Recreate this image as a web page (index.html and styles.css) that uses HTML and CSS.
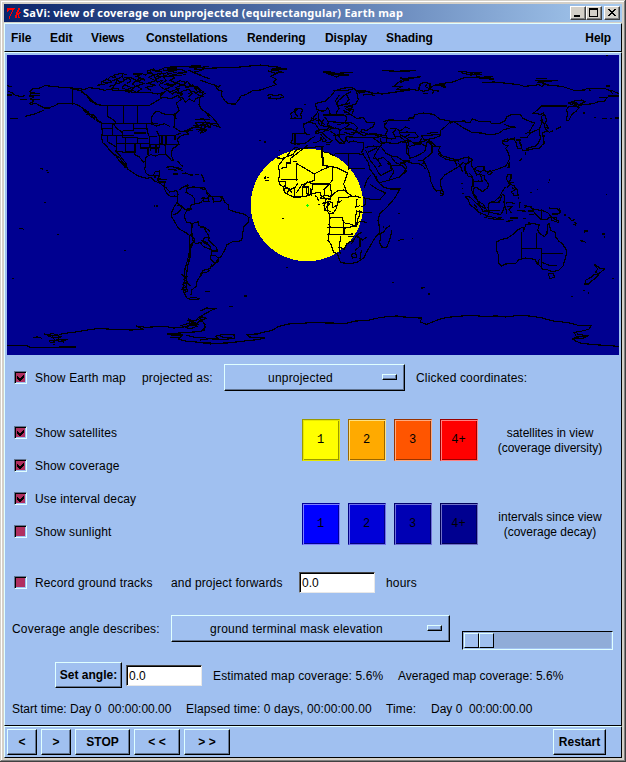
FILE: index.html
```html
<!DOCTYPE html>
<html lang="en">
<head>
<meta charset="utf-8">
<title>SaVi: view of coverage</title>
<link rel="stylesheet" href="styles.css">
</head>
<body>
<div class="window">
  <header class="titlebar">
    <svg class="logo" viewBox="0 0 16 16"><path d="M1 3h8v1h-1v1h-1v2h-1v2h-1v2h-1v3H3v-3h1V9h1V7h1V5H3v1H2v1H1zM12 3h2v2h-1v2h-1v1h1V7h2v1h-1v1h-1v3h1v1h-2v-3h-1v3H9v-3h1V7h1V5h1z"/></svg>
    <h1 class="title">SaVi: view of coverage on unprojected (equirectangular) Earth map</h1>
    <div class="winbuttons">
      <span class="winbtn"><svg viewBox="0 0 14 12"><path d="M3 8h6v2H3z"/></svg></span>
      <span class="winbtn"><svg viewBox="0 0 14 12"><path fill-rule="evenodd" d="M2 1h9v9H2zM3 3h7v6H3z"/></svg></span>
      <span class="winbtn close"><svg viewBox="0 0 14 12"><path d="M3 2h2v1h1v1h2V3h1V2h2v1h-1v1H9v1H8v1h1v1h1v1h1v1H9V8H8V7H6v1H5v1H3V8h1V7h1V6h1V5H5V4H4V3H3z"/></svg></span>
    </div>
  </header>
  <nav class="menu bevel">
    <span class="m-file">File</span><span class="m-edit">Edit</span><span class="m-views">Views</span><span class="m-const">Constellations</span><span class="m-rend">Rendering</span><span class="m-disp">Display</span><span class="m-shad">Shading</span><span class="m-help">Help</span>
  </nav>
  <main class="main bevel">
    <svg class="map" viewBox="7 55 612 300">
      <circle class="covered" cx="307" cy="205" r="56.300"/>
      <g class="coast" transform="translate(0 50) scale(.333333)">
        <path d="M21 107l14 3M24 124l14 5 8 7 20 4 10-4M21 135h14M60 148h20M30 205h24M76 199l15-4 12-3 18-7 10-4M132 175h18M98 165l-9-4 13-8-12-6 12-6-14-3 5-8h15l-20-5 10-8 22-3 14-7 14 1 36 4 31 2 39 4 12-5 27 3 21 5 12-3 24 4 20-1 15 4 28 3h39l22 4 18-5M95 130h25M88 137h32M97 149h22M95 161h14l15 9 18 4 18-5 17-9h43l21 9 10 8 10 5M217 118v47M217 118l25 3 18 15 10 16 20 12 30 3h127M245 126l20 13 10 12 15 10M247 176l12 7 9 9 12 3 9 9 7 10 8 6 3 28-2 15 3 15 11 9 8 12 15 15 18 10 8 16 13 7M250 182l14 3-3 7 15 2v7l14 2 1 10 14 4M257 186l8 6M267 196l7 5M278 203l8 6"/>
        <path d="M322 167v32l12 6 15 13M371 167v52M413 167v52M304 220h145l20 8 24-7 16 8M302 236h35M337 220v36h-35M323 256v19l14 9 12 8M337 256h64M350 256v47M350 281h28M368 242v21h45v17M368 242h33v-22M401 235h38M401 249h38M340 220l9 14 14 10 5 8M377 263v43h28v-26M377 280h72M413 265h31M439 220l3 25 6 15 3 44M422 281v13h22v21M452 294h22M470 243l8 15 2 25M449 283h87M448 260l23-1M480 256h45l18-7M486 256v30M498 256v27M525 255v14M479 283l-5 27M495 285l2 27M468 285v25"/>
        <path d="M345 301l13 13 8 12 14 16-5 10-8-10-12-13-9-17M350 320l8 14 17 15M350 303l24 4 24-2 9 10 11 6 12 15 5-1 2 11-3 11 4 12 8 7 13 1 6-11 14-3-1 14-7 13 7 6h17l-2 21 8 14 12 9 12-2 9 4M366 335l12 10 5 12 18 13 18 10 22 5 12-3 11 12 14 4 12 10 8 5 12 14M465 385v-9h10v22M474 387l28 1M435 337l2-15 15-8 15 4 11-5 22 2 16 18 4-1-7-20 4-15 12-8 8-6-5-16 13-11 22-4-13-9 14-6 18-6 15 3 7 8-9 8 16-5 4-5M498 352l18-3 19 8 14 5M503 357l29 4M527 352l20 5M520 372h15M545 371l12-2 14 6h9M586 374h10M606 375l5 12v8M530 332l10 8M540 343l10 6M558 241h22M580 227h24v12h-16M584 208h46M604 217h26"/>
        <path d="M292 107l12-4 2-8 18-8 8-8 16 5-7-8 17-5h12l10 4M294 104h16l17-7M306 95l13 3 18-2M319 86l14 8 21-8-8 15 20-3M327 109l17-4-7 10 20 2M341 76l11 12 13-8M348 92l19 3 18-12 8 10-12 7M366 72l5 20M373 82h16l15 6M374 105l21 8-14 6-15-5 10-12M376 123h18l-10 6M398 72h28l-17 7 20 7-16 8 19 7-22 7 15 9-15 10-15-8 11-10-9-8 13-9-14-7M408 93l12-10 16 8M424 70l13 5 14-10 11 9-16 8 20 10-24 8 25 6-30 6 17 9M442 63l18-6 11 7 21-10 20-3h17l28-2 23-1h22l-19 9 23 4-26 6 22 8M442 67l22 7 23-6-15 11 24-1 14-9 15 7M456 61l29 5M462 76l10 20 14-5-8 15 12 11M465 89l24-11 9 14-15 10M470 69l21 3 18-8 21 4M489 60l23 3 31-5 16 7-29 5M495 79h25l18-11 20 7M500 71l24 13-14 7 20 9-19 8-19-6M497 101l22 3 21-12 22 7M510 112l-15 6 17 7 28-11M502 57h29M514 76h33M565 60l30 14 35 13M530 70l30-3M545 50l55 2 27-2"/>
        <path d="M447 167l16-10 14-8 12-8 24 5 20-10 10 12-14 12 8 21-12 15 4 11-7-12-16-1-17-3-15-8-11 5-8 14 1 18 17 1M525 190l-3 42 13 9 7 4M483 136l18-16 16 12 18-12-7-8 25-9 5 10 22-5 12 8 9 4-13 10 17 10-18 6-5 9-14-8-12 10-8-13-13-1 12-13-14-5M512 112l20-14 16 9 14-13 10 12 20 5 18 15M520 127l28 5-12 9M542 125l25-7 10 13-14 11M560 111l17-6 14 18 18 7M565 132l14-9 18 13 15 3M599 145l-2 20 8 14 11 6 8 12 6 7M485 147l-5-12 10-8M542 243l20 3 13-12 20-6-8-9 20-2 8 16-22 12"/>
        <path d="M508 425h10l12-4 4 12-3 24-9 14-8 18 1 11 12 20 8 15 24 14 10 7v46l-6 27-8 27-2 36-4 22 4 17 9 15 20 3 18-3M569 555l6 0 5 21-8 8 0 20-5 25-5 26-3 26v35M580 576l-8 20-3 40M580 560l5 16M590 742h-20M573 735l2-15 14-11 2-15 7-11 10-14 13-3 9-5"/>
        <path d="M536 421l10-8 16-8 1 10 14-4 25 1 13 2 8 16 7 4M560 413l-2 14 17 9 8 9 1 17-12 4 1 12-15 1-15-11-13-1M531 460l15 8-4 12-9 9-13 6M544 470l13 9 15-5M583 455l2 7 17-4 10-12 12-2 6-10M602 445l12-1M573 479l-13 3-8 16 7 18 17 4v13l-2 12 4 13M576 521l19-6 2 12 19 6 14 11M578 555v17l8 8 19-2 8-15 17 1M611 566l1 12 18 10M557 410l9-5M545 672l9 8M550 680h10l-8 9 10 7-14 8 11 6-14 8 15 7-11 3M562 698l10 10M546 716l17 4M617 725h13"/>
        <path d="M120 355l10 3M137 361h8M142 368h6M132 457h5M463 466v4M467 468h8M58 535l8 1 5 2M171 554h6M372 601h5M37 685h5"/>
        <path d="M21 887h60l9 5h80l9-1h48M100 862h22M108 859l18 6M133 852l13 3 10-5 16 5-14 3-18-2 20 8 24-5-13 10 32-1-28 7 23-3M148 873l15-3 28 6M150 877l14-1M162 881v5M170 858l17-7 40-5 36-6 34-5 50 4 50 1 22-2h12l-22-10 27 4 37-2 21-1 26 5 20-1 22-4 19-7 12-3 9-8 19-6-24-4-10 10-24-1 18 10-20 7 30-1M564 805l28 18-23 4M540 828l28-9 22 10-20 8-25-10M596 811l13 5 7 15-12 14-25 1-39 3-38 2 20 6 26-1-13 11 20 6 33 3 24 3 20 3M500 853h50M510 862h32M558 855l25 7h35M578 814l24-9 8-12 20-8"/>
      </g>
      <g class="coast" transform="translate(200 50) scale(.333333)">
        <path d="M0 58l38-4 62-1 50-5 32-3 31 4 27 3-11 9 24 7-24 1M215 57h47M205 63l25 8-18 8 18 9-10 7 8 9-27 9-18 7-24 1-21 13-14 3-9 14-9 11H96l-13-2-10-9-8-14 1-14-14-4-3-12-22-7-19-7-8-1M45 110l15-2-8 8M200 136l14-3 8 4 22-3 8 7-22 6-24-3 8-4M213 60h18M370 66h23l20 6 14-5h32M375 68l22 8 12 5 14-6h23M387 72h45M545 62l30 1 29 1h27"/>
        <path d="M630 83l-27 8-21 17 25 1-15 8 38 2M550 133l-18-4-10 3-25-9h-26l-9-7-10-4-25 3-22 8-14 17-16 14-28 6 2 17 18 7 10-2 6-9 4 7 5 16h9l8-3 2-9 7-9-7-11 4-12 17-15 11-8M400 122h38l25-6 17 14M418 135l-12 18 8 13 23-2 12-4M454 125l-16 7 10 16-11 12 12-1M470 124l5 25-9 14-20 5-10 8 14 7M480 129l22-5 26 8M490 135l24-2 10 5M530 129l30 1 70-10M312 163h5M270 207l15-3 20 2-3-13 6-14-11-5-13 4 3 14 8 8M279 186l-7 6 4 12M296 176l-14 8 8 12M275 283l3-33 38 1-4-17-3-12 18-6 12-12 10-12 6-10 15-2M285 253v32M274 283l-1-6M277 281l18 1 18-1 12-7 9-9 10-5M316 251l15 4M310 225l18-10 24-10M325 217l20 3 13 21-12 9M333 203l22 10 3 12M355 190v17l20 18M370 195h62l8 6-3 17-52-3-12-15M371 207l-8 20 15 2 12 3-22 15M344 248l12-10 30 3 12-8-16-8 6-13M345 250l22-2 12 13 17 11-9 7-22-7M362 253l18 20M392 237l16-3 14 5 16-8 11-8-23-7M390 243l15 10 2 15 13 12M399 257l23-3 14-2M421 237l-4 24 15 17M438 193h14l18 12 20-2 9 13 24 3-2 10-21 12-18-3M445 175l15 4-3 14M433 170h25l-12 18h-14M436 216l24 4 13 13-14 22-26-8M408 271l14 8 11 1 8-20h18M340 277h9l22-11M363 262v9M378 284h12M435 237h20l24 12M443 180l18-2M430 181l25 14M440 210l-9 10-20 5"/>
        <path d="M440 260l16 2 29 1 32 0 26-3M435 263l10 14 16-4 16 5 14 1-2 20-2 6M452 248l18-2 20 10 28-4 28 9 14 3v12l-17 2M490 236l-9 9 14 4 12 4M541 263l4 20-5 8-20-3-24 4M540 257h22M520 264l23 17M508 251l38 2M550 216l14-6 66 1M555 218l-2 14 11 8-8 14 6 11 13 2 12-3-8-16 9-11-17-1M565 210l-9 14M590 238l13 4 13-11 14 5M600 242l-2 9 14 10 18-8M587 260h14l11 10 18 6M545 281l15-3 30 3 18-7 22-3M544 291l14 19 16 8 17 2 18 12h21M539 291l-17 27 10 10 12 18-10 4M496 300l7 12 8 20 15 18 8 16 8 11M503 307l28-14M518 323l14 5 18-6 21 20 3 18-32 17M560 340l18 7 24-1M573 349l9 17-14 21M573 320l13 17 21 10 13 15-19 18-35 11-28 7-6-4-3-15M606 339l24-6M620 276v34l10 7"/>
        <path d="M287 291l-15 12-12 17-10 7-15 21 4 22-3 18 2 13 13 12 2 14 12 7 16 7 20 0 20-3 16-7 17-4 7 2v7l11 6 6 7-6 17 1 10 15 14 2 15-3 20 3 5-3 22-3 19 10 14 6 21 12 5 10 27 29 3 20-4 21-14 7-16 15-25 10-17 15-18v-16l-5-20 5-19 23-22 21-24 17-29h-30l-19-5-18-17-10-20-13-17-5-20-22-34M287 291l12 5 24-2 31-4h15l-2 15 20 4 15 9 4-8 39 0 19 0 20 3 8-1"/>
        <path d="M232 325h16l13-5 19-7 7-12 19-7M242 355l18-3v-13h12v-14l52-40M280 335h11M242 388h52M289 340v52M289 340l22 13 32 19 24-13 25-10M366 290v32l5 25 27 3 17 5 26 13M343 373v18l-37 13-16 24M370 322l-1 26M398 351l-1 40-9 11M446 308v52M446 356h50M443 367l-6 20-6 15 10 26 16 11M390 402l4 24-2 22-8 2M337 402h50M340 400l-7 34M324 394l-17 18v25M327 394l13 12M307 411h19l-2 27M318 412l4 24M240 394h15l2 18 15 6 14-7 8-12M253 404l-2 12 16 1 9 12M267 418l-7 14M284 412l-1 30M388 402l-16 16 2 17-13 10M361 445h29l11-15 16-9 15-1 10 8M371 435l24 5M381 454l15 3 3 16 13-9 4-21 24-1 27-4 15 5M366 462l18-5-1 24 9 5M372 456l2 23 16-20M385 490l15-1 8-12 5-18 13-8M390 502h36l5 16-2 15h-47M380 553h52l28-1M432 532v20M430 518l20 4 18 8M470 480l-3 19 1 31M471 448l-3 23 12-4M469 485l10-2v14l-6 10-5 24M432 556l-2-22h8l28-6 13-14 21 3M423 557l-6 35 4 19M418 591l14 7 8-16 22-14 11-14M462 560l-18 0M455 613l12-4 3 12-13 3zM470 560l10 6v23l-15 12M463 568l-9 14M480 486l37 2M484 471l13-8v-19M490 443l24 5 25 1 18-20-26-12-20-13M512 375l-12 16-7 22M484 600l-4 26M346 437l6 5 3 10M355 464h6M331 413l3 24M487 545l-17 11 18 14 12-8"/>
        <path d="M197 377v6M201 383h6M192 384h5M194 391h12M246 505h5M236 301h4M178 272h6M192 276h5M232 324h9M258 653h5M577 697h6M595 491h5M533 525h6M551 527v6M570 527l-12 8-6 10-12 6 1 13-2 15 6 12 15 1 8-19 5-18 2-14M595 572h6M607 568h4M16 725h14M131 738h10M88 769h10M4 373v5M12 389v6"/>
        <path d="M0 415l18 5 4 14 14 6 32 1 5 14 12 10 2 14 19 7 28 7 13 10-2 13-14 15-3 22-3 18-12 4-13-1-19 10-6 15-13 23-7 3 0 8-18 16M22 440l6 15H12l-3-13M38 438l2 18 22-3 6-10M0 532l12 2 12 20 3 18 22 20 3 11h-17l-4-12-10-13-16-8M0 578l11 12 24 10M35 605l-4 22 14 13 11-15-11-9-11-1M36 642l-5 14-21 5-10 14M0 170l6 10 13 7 15 12 12 13 13 19-27-8 0 10-18-6-14-4M0 207h12l8 15 33-2M0 223h17M20 223l14 10M0 240h20M0 125l15 5-15 9"/>
        <path d="M0 783l20-9 25 2-17 8-28 16M0 805l15 18-2 17-13 4M0 870l28-4 28 1-9-8 20-6 35 2 1 9-25 4-42-1M55 855l15 7 26 1M0 877l43 3 38-1 53-6 37-4 24-5-47-3-9-8 34-1 14-5 27-5 21-12 30-8 28-1 40-3 54 1 52 1 28-7 34-1 33-8 32-5 26-1 20 3 20 1"/>
      </g>
      <g class="coast" transform="translate(400 50) scale(.333333)">
        <path d="M0 62h47M0 84l18 1 45-5-35 6-28 12M0 95l28-5M0 119h20l-20 4M0 119l28-2 26 4 8-20 12-4 16 4v14l10 9-3 9M60 103l-2 16 12 5 20-5M82 101l-6 9 25 12 15 1M90 113l15-8 28 0 3 7-12-2M70 130h15M130 105l-8-4 37-5 30-12 37-2 19 3 38 3-12-5-23 1-20-6 6-7M175 65h22l13 4 36-1-24 3 24 2-34 2-28-7M251 80h29M245 98l37-2 30 3 45 5 15 5 24-2 22-3 8 6 10-10-23-6h42M408 85h33M405 92l69-1M410 97l16 1 8 6 29 3 23 2 36 12 32-1 6-5h53l17 7 8 9M566 115l5 7M617 108h14M632 120l24 11M656 138l-33 0M598 143h23l-9 12-17 0-15 6-45 5 20-11-11-5-26 4 16 6-31-2M505 160l22 8 11 4-9 11-14 11-9 18h-6l2-23-2-10 5-8 14-1 16-8M521 159l15 15M500 168h-75l-22 20-6 3h14l11 3 10-6M434 193l5 16-2 11 8 14-11-1-2-13-9-8 3-14zM425 201l2 14-8 21-27 13-10 12-23 3"/>
        <path d="M0 211h25l3-7h12l4-10 25-5 32 4 18 14 30 6 15 3 27 18 26 14 28 1 25 6 26-5 15-11 23-6 14-1-22-4-13-5M149 220l12-6 32-1 4 3 12 2 9-11 18 7 34 1 5 6h23l17-9 6-12 15-7 25 0 7 11 16 8 20 7-8 12-8 15-12 5M149 217l-12 12-15 12v16l-22 8-27 5-8-12 22-2 35-4M80 250l35-3M0 248l20-2 25 2 10 12-10 4-22-3M0 255l20 10 22 15 22 3M0 275l26 3-3 12 3 17 2 18 18-5 28-15 4-14 2-12 8-5 10 4M64 265l-4 13 18-7 10 7 8 3M40 280l20-4M26 290l36-10 14 8M100 290l-17-15 7-6M86 269l13 12 9 8 12 1-5 11 11 16 25 8 24 5 11-5 20-4 13 9-12 7-3 5M120 306l-5 8 23 14 26 5 7 14M156 326l20 8"/>
        <path d="M0 339l18-6 22 8 14-1 14 7 8 9M54 331h17l10 23 8 17 3 23 10 21 7 8 11-3 3 11 7-2-5-14-3-7v-18l12-15 20-12 27-16 8-10 7 4-1 15 10 24 10-1 3 14-3 26 2 8 13 14 2 12 17 9 8 14-16-8-9-18-8-8-5-12 3-15M108 289h-12v20l-26 21-1 11M117 420l12 4 1 10-9 3M0 378l14-13 6-15-7-9-13 0M184 401h5M187 413v5M187 430h6M176 340l8 14 4 13M207 325l-3 12-12 14 5 20M214 333v14l9 12M223 359l7 16 8-3 14 5 3 11 12 17-5 9-14 11-16-11-13-4v-14l15-3 13 2-5-21M208 370l10 10 2 18M220 360l12-10h20v10l9 6 12-2 27-9 18-8 11-20-3-16-9-16 8-8-15-3-2-9 12 0 12-9 10 1 8 15 2 13 12 1v-12l-7-14M221 357l21 9 10-7M262 370l8-8 6 6-9 7zM323 343l4-3v12l-6 1M306 273l16-6 15 2 7-6M347 270h15M357 277l10 15M427 246l3 19 3 16-8 5-6 9-14 1-8 1-14 4-4-4 8-4 20-5 8-8 7-17-4-14 2-17M429 247l14-3-8-9M350 295h15M365 300l18 1M377 307v8M425 258h10M446 248l14-6M467 238l16-8M365 325l-6 8"/>
        <path d="M195 439h12l11 10 10 10 11 9 10 16h19l-5 14-10-4-20-9-10-12-11-6-8-18-9-10M230 478l13 15M222 462l9 12M252 503l16-4 24 6 14-3-14 7-29-5M298 508h14M318 514l20-2M330 504h24M268 458l17-5 13-12 6-10 10 6-2 18 1 15-5 15-6 8-16-2-17-5-5-13zM303 430l13-19M272 459l26-3 8-20M251 482h49M318 462l4-5 24 3M315 469l5 14-2 10M320 470h16l-9 9 7 10M321 373h12v14l-4 6 3 10 12 6 4 10M322 373l-2 15 10 18M333 398h8M340 405l10 11M332 427l10-6 10-3 2 17-12 1-5-8M328 405l-8 8M337 413l9 8M354 444h4M360 456l-2 17M372 465l9 3-9 6M381 469h13l4 14-13 0M390 472l15 7 20 2 18 7 12 13 15 3M350 481h25M365 484h14M369 507l10-3M386 493h16M398 480l9 13 16 16 17 0 12-10 4 12 18 6 3-7M425 478v31M456 492h18l8-6-5-10M448 474l24 3 10 10M459 504l15 9M492 495h6M505 501l8 7M514 512l12-4M522 516l9 6M520 522l8 4M410 419h4M443 398h5M446 390h4M390 428h6M617 434h5"/>
        <path d="M297 641l-2-27-6-15 1-23 12-7 21-5 16-11 12-12 12-7 6-2 2 9 7-17h13l-8-6 18 3 17 3-5 16 6 10 15 10 7-10 1-25 5-4 6 21 12 4 3 16 7 10 12 9 13 20-2 17-9 30-13 13-20 4-14-6-14-2-10-11-6-7-9-11-26-4-20 5-10 11-30 2-12 6zM365 545v81M410 549v47M365 596h60v61M425 610h63M425 637l24 9 21 1M405 629l8 14 5-16M445 670h16l2 12-14 4zM585 642l13 12 16 3-14 11-5 4-8-6 6-9-10-14M585 672l10 4-12 11-11 8-7 7h-11l4-12 15-8 12-10M550 721h5M563 729h5M513 740h5M64 713h11M66 710v8M85 732h5M636 685h6M552 543h11M554 540v8M540 570l18 7M542 575h10M605 552h11M612 560l4 3M0 568h12M35 565h4M548 189h8M582 203h6M605 205h16M629 206h8M645 204h11M617 17h6"/>
        <path d="M0 798l22 5 43 1-4 12 19 7 17-7 21-8 25-6 42-4 31-2 32 3 45-1 24 3 39-5 24 1 43 6 36 10 22 2 33 5 20 6 40 1-8 11-28 7-16 2 7 13 37-3-20 9-30 1 18-8M532 852l22 4-35 9 9 9 14 5 29 4 41 3 44 3"/>
      </g>
      <path class="satellite" d="M306 205.500h3M307.500 204v3"/>
    </svg>

    <section class="row projection">
      <span class="check on"><svg viewBox="0 0 9 9"><path d="M1 3v3l2 2h1l4-4V1L4 5H3L1 3z"/></svg></span>
      <span class="label t-earth">Show Earth map</span>
      <span class="label t-proj">projected as:</span>
      <div class="option opt-proj"><span>unprojected</span><i></i></div>
      <span class="label t-click">Clicked coordinates:</span>
    </section>

    <section class="display">
      <div class="toggles">
        <div class="toggle"><span class="check on"><svg viewBox="0 0 9 9"><path d="M1 3v3l2 2h1l4-4V1L4 5H3L1 3z"/></svg></span><span class="label">Show satellites</span></div>
        <div class="toggle"><span class="check on"><svg viewBox="0 0 9 9"><path d="M1 3v3l2 2h1l4-4V1L4 5H3L1 3z"/></svg></span><span class="label">Show coverage</span></div>
        <div class="toggle"><span class="check on"><svg viewBox="0 0 9 9"><path d="M1 3v3l2 2h1l4-4V1L4 5H3L1 3z"/></svg></span><span class="label">Use interval decay</span></div>
        <div class="toggle"><span class="check"></span><span class="label">Show sunlight</span></div>
      </div>
      <div class="legends">
        <div class="legend">
          <span class="swatch s1">1</span><span class="swatch s2">2</span><span class="swatch s3">3</span><span class="swatch s4">4+</span>
          <p class="caption">satellites in view<br>(coverage diversity)</p>
        </div>
        <div class="legend">
          <span class="swatch d1">1</span><span class="swatch d2">2</span><span class="swatch d3">3</span><span class="swatch d4">4+</span>
          <p class="caption">intervals since view<br>(coverage decay)</p>
        </div>
      </div>
    </section>

    <section class="row tracks">
      <span class="check"></span>
      <span class="label t-rec">Record ground tracks</span>
      <span class="label t-fwd">and project forwards</span>
      <span class="entry">0.0</span>
      <span class="label t-hours">hours</span>
    </section>

    <section class="angle">
      <span class="t-cov">Coverage angle describes:</span>
      <div class="option opt-angle"><span>ground terminal mask elevation</span><i></i></div>
      <div class="slider"><div class="thumb"><b></b><b></b></div></div>
    </section>

    <section class="setrow">
      <span class="button btn-set">Set angle:</span>
      <span class="entry">0.0</span>
      <span class="t-est">Estimated map coverage: 5.6%</span>
      <span class="t-avg">Averaged map coverage: 5.6%</span>
    </section>

    <section class="times">
      <span class="t-start">Start time: Day 0&nbsp; 00:00:00.00</span>
      <span class="t-elapsed">Elapsed time: 0 days, 00:00:00.00</span>
      <span class="t-time">Time:</span>
      <span class="t-now">Day 0&nbsp; 00:00:00.00</span>
    </section>
  </main>
  <footer class="toolbar bevel">
    <span class="button b30">&lt;</span><span class="button b30">&gt;</span><span class="button b55">STOP</span><span class="button b46">&lt; &lt;</span><span class="button b46">&gt; &gt;</span><span class="button restart">Restart</span>
  </footer>
</div>
</body>
</html>
```
FILE: styles.css
```css
* { box-sizing: border-box; }
body {
  margin: 0;
  font: 12px/15px "Liberation Sans", sans-serif;
  color: #000;
  white-space: nowrap;
}
.window {
  width: 626px;
  height: 762px;
  padding: 4px;
  background: #d4d0c8;
  box-shadow: inset -1px -1px #404040, inset 1px 1px #d4d0c8, inset -2px -2px #808080, inset 2px 2px #fff;
}
.titlebar {
  display: flex;
  align-items: center;
  height: 18px;
  margin-bottom: 1px;
  padding: 0 2px;
  background: linear-gradient(90deg, #0a246a, #a6caf0);
}
.logo { width: 16px; height: 16px; fill: #f00; shape-rendering: crispEdges; }
.title {
  width: 500px;
  margin: 0 0 0 1px;
  font: bold 11px/16px "Noto Sans", sans-serif;
  letter-spacing: .22px;
  color: #fff;
}
.winbuttons { display: flex; margin-left: auto; }
.winbtn {
  width: 16px;
  height: 14px;
  border: 1px solid;
  border-color: #fff #404040 #404040 #fff;
  background: #d4d0c8;
  box-shadow: inset -1px -1px #808080;
}
.winbtn svg { display: block; width: 14px; height: 12px; shape-rendering: crispEdges; }
.close { margin-left: 2px; }
.bevel {
  border: 1px solid;
  border-color: #e0ffff #000 #000 #e0ffff;
  background: #a0c0f0;
}
.menu { display: flex; align-items: center; height: 29px; padding: 1px 0 0 6px; font-weight: bold; letter-spacing: -.08px; }
.m-file { width: 39px; }
.m-edit { width: 41px; }
.m-views { width: 55px; }
.m-const { width: 101px; }
.m-rend { width: 78px; }
.m-disp { width: 61px; }
.m-help { margin-left: auto; margin-right: 10px; }
.main { height: 674px; padding: 2px; }
.map { display: block; width: 612px; height: 300px; background: #000090; }
.covered { fill: #ff0; shape-rendering: crispEdges; }
.coast { fill: none; stroke: #000; stroke-width: 3.5; shape-rendering: crispEdges; }
.satellite { stroke: #0f0; shape-rendering: crispEdges; }

.row { display: flex; align-items: center; padding-left: 7px; }
.label { padding-top: 2px; }
.check {
  flex: none;
  width: 13px;
  height: 13px;
  margin-right: 8px;
  border: 1px solid;
  border-color: #607390 #e0ffff #e0ffff #607390;
  background: #b03060;
  box-shadow: inset 1px 1px #000, inset -1px -1px #a0c0f0;
}
.check svg { display: block; width: 9px; height: 9px; margin: 1px; shape-rendering: crispEdges; }
.projection { height: 45px; }
.t-earth { width: 107px; letter-spacing: .16px; }
.t-proj { width: 82px; letter-spacing: .16px; }
.option {
  display: flex;
  align-items: center;
  height: 27px;
  border: 1px solid;
  border-color: #e0ffff #000 #000 #e0ffff;
  box-shadow: inset -1px -1px #607390;
}
.option span { flex: 1; padding: 2px 6px 0 0; text-align: center; letter-spacing: .2px; }
.option i {
  width: 15px;
  height: 6px;
  margin: -1px 7px 0 0;
  border: 1px solid;
  border-color: #e0ffff #000 #000 #e0ffff;
  box-shadow: inset -1px -1px #607390;
}
.opt-proj { width: 181px; }
.t-click { margin-left: 11px; letter-spacing: .16px; }

.display { display: flex; height: 164px; padding: 16px 0 0 7px; }
.toggles { width: 288px; }
.toggle { display: flex; align-items: center; height: 33px; letter-spacing: .14px; }
.legends { display: flex; flex-direction: column; gap: 42px; padding-top: 3px; }
.legend { display: flex; gap: 8px; height: 42px; }
.swatch {
  width: 38px;
  height: 42px;
  padding-right: 1px;
  border: 1px solid;
  font: 12px/41px "Liberation Mono", monospace;
  text-align: center;
}
.s1 { background: #ff0; border-color: #999900 #e6e600 #e6e600 #999900; box-shadow: inset 1px 1px #e6e600, inset -1px -1px #999900; }
.s2 { background: #ffaa00; border-color: #996600 #ffe080 #ffe080 #996600; box-shadow: inset 1px 1px #ffe080, inset -1px -1px #996600; }
.s3 { background: #ff5500; border-color: #993300 #ffaa80 #ffaa80 #993300; box-shadow: inset 1px 1px #ffaa80, inset -1px -1px #993300; }
.s4 { background: #f00; border-color: #990000 #ff8080 #ff8080 #990000; box-shadow: inset 1px 1px #ff8080, inset -1px -1px #990000; }
.d1 { background: #00f; border-color: #000099 #8080ff #8080ff #000099; box-shadow: inset 1px 1px #8080ff, inset -1px -1px #000099; }
.d2 { background: #0000d8; border-color: #000082 #7070ec #7070ec #000082; box-shadow: inset 1px 1px #7070ec, inset -1px -1px #000082; }
.d3 { background: #0000b4; border-color: #00006c #7070da #7070da #00006c; box-shadow: inset 1px 1px #7070da, inset -1px -1px #00006c; }
.d4 { background: #000090; border-color: #000056 #7070c8 #7070c8 #000056; box-shadow: inset 1px 1px #7070c8, inset -1px -1px #000056; }
.caption { width: 128px; margin: 7px 0 0 0; text-align: center; }

.tracks { height: 37px; }
.t-rec { width: 136px; letter-spacing: .14px; }
.t-fwd { width: 128px; letter-spacing: .14px; }
.entry {
  width: 76px;
  height: 21px;
  padding: 1px 2px;
  border: 1px solid;
  border-color: #404040 #e8e8e8 #e8e8e8 #606060;
  background: #fff;
  box-shadow: inset 1px 1px #000;
  line-height: 19px;
}
.t-hours { margin-left: 11px; letter-spacing: .16px; }

.angle { display: flex; height: 49px; padding: 14px 0 0 5px; }
.t-cov { width: 159px; padding-top: 7px; letter-spacing: .2px; }
.opt-angle { width: 279px; }
.slider {
  width: 151px;
  height: 19px;
  margin: 16px 0 0 12px;
  padding: 1px;
  border: 1px solid;
  border-color: #000 #e0ffff #e0ffff #000;
  background: #90acd8;
  box-shadow: inset -1px -1px #a0c0f0;
}
.thumb { display: flex; width: 30px; height: 15px; }
.thumb b { width: 15px; border: 1px solid; border-color: #e0ffff #000 #000 #e0ffff; background: #a0c0f0; }

.setrow { display: flex; align-items: center; height: 26px; margin-top: 12px; padding-left: 48px; }
.button {
  height: 26px;
  border: 1px solid;
  border-color: #e0ffff #000 #000 #e0ffff;
  box-shadow: inset -1px -1px #607390;
  font-weight: bold;
  line-height: 24px;
  text-align: center;
}
.btn-set { width: 67px; margin-right: 4px; }
.t-est { width: 185px; margin-left: 11px; padding-top: 2px; letter-spacing: .13px; }
.t-avg { padding-top: 2px; letter-spacing: .03px; }
.times { display: flex; margin-top: 14px; padding-left: 5px; }
.t-start { width: 174px; }
.t-elapsed { width: 200px; letter-spacing: .13px; }
.t-time { width: 45px; letter-spacing: .15px; }

.toolbar { display: flex; gap: 4px; height: 32px; padding: 2px; }
.b30 { width: 30px; }
.b55 { width: 55px; }
.b46 { width: 46px; }
.restart { width: 53px; margin: 0 13px 0 auto; }
```
